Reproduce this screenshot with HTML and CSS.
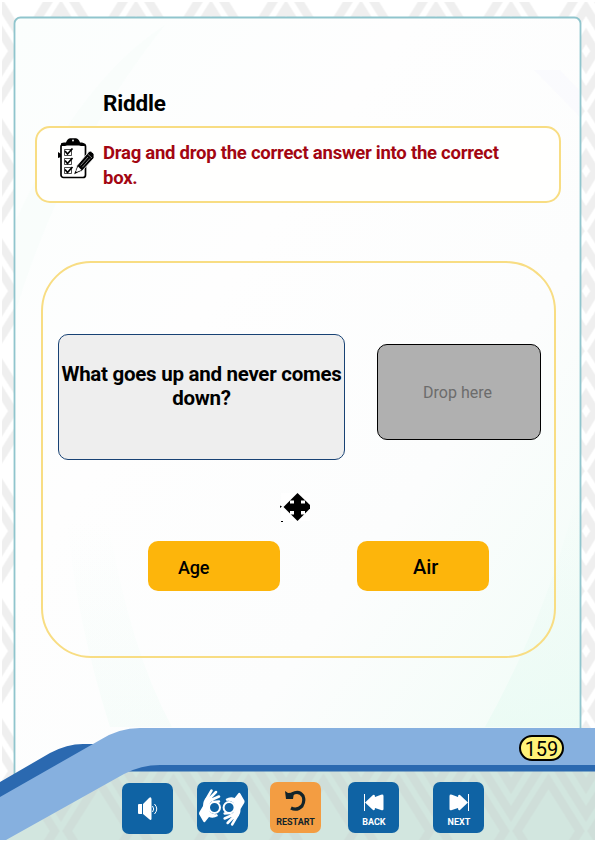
FILE: index.html
```html
<!DOCTYPE html>
<html lang="en">
<head>
<meta charset="utf-8">
<title>Riddle</title>
<link rel="stylesheet" href="styles.css">
</head>
<body>
<svg class="backdrop" viewBox="0 0 596 842" aria-hidden="true">
  <defs>
    <pattern id="weave" width="75" height="120" patternUnits="userSpaceOnUse" x="-51.5" y="-9">
      <g fill="none" stroke-width="8.500">
        <path d="M37.500 -10L81.500 60L37.500 130L-6.500 60ZM37.500 17L64.500 60L37.500 103L10.500 60Z"/>
        <path d="M37.500 45L46.700 60L37.500 75L28.300 60Z"/>
      </g>
    </pattern>
    <linearGradient id="paper" x1="0" y1="0" x2="1" y2="1">
      <stop offset="0" stop-color="#fbfefd"/><stop offset=".35" stop-color="#fefefe"/>
      <stop offset=".65" stop-color="#fcfdfd"/><stop offset="1" stop-color="#effcf6"/>
    </linearGradient>
    <linearGradient id="mint" x1="0" y1="0" x2="0" y2="1">
      <stop offset="0" stop-color="#eafaf4" stop-opacity="0"/><stop offset="1" stop-color="#e8fbf3"/>
    </linearGradient>
  </defs>
  <rect x="2" y="2" width="593" height="838" fill="url(#weave)"/>
  <rect x="14.500" y="17.500" width="566" height="800" rx="6" fill="url(#paper)" stroke="#90c5cd" stroke-width="1.800"/>
  <path d="M67 520Q76 620 110 727H172Q130 650 108 520Z" fill="url(#mint)" opacity=".3"/>
  <path d="M579 485Q550 610 485 727H579Z" fill="url(#mint)" opacity=".7"/>
  <path d="M16 310Q65 150 165 25Q80 80 16 220Z" fill="#f3fbf8" opacity=".3"/>
  <path d="M534 70H560L579 90V116Z" fill="#f8f8fe" opacity=".6"/>
  <path d="M0 840V834L123 771H595V840Z" fill="#d2e6df"/>
  <path d="M6 840L125 771H595V840Z" fill="url(#weave)" class="footer-weave"/>
  <path d="M0 782L50 753Q67 744 83 744H100L150 762H595V771.500H123L0 800Z" fill="#2b69b0"/>
  <path d="M0 797L100 740Q119 728 140 728H595V765H160Q141 765 124 774L6 840H0Z" fill="#86b0df"/>
</svg>

<main class="page">
  <h1 class="title">Riddle</h1>
  <section class="instruction">
    <svg class="checklist" viewBox="0 0 36 42" aria-hidden="true">
      <rect x="3" y="6" width="24.500" height="33.500" rx="2.500" fill="#fff" stroke="#000" stroke-width="1.700"/>
      <path d="M3 8V6Q3 4.500 6 4.500H8Q9 1 12 .3H18Q21 1 22 4.500H24Q27 5 27 8H23L21 7.500H9L7 8Z"/>
      <circle cx="15" cy="2.500" r=".9" fill="#fff"/>
      <path d="M0 14L3 16V19L0 20Z"/>
      <g fill="none" stroke="#000">
        <path d="M6.500 11.500H13.500V17.500H6.500ZM6.500 20.500H13.500V26.500H6.500ZM6.500 29.500H13.500V35.500H6.500Z" stroke-width=".7"/>
        <path d="M7 13L9.500 16L14.500 10.500M7 22.500L9.500 25.500L14.500 20M7 31.500L9.500 34.500L14.500 29" stroke-width="1.800"/>
      </g>
      <path d="M16 36.500L19 27.500L31 13.500Q32 12.500 34 14L36 16V20L24 33Z" stroke="#fff" stroke-width=".8"/>
      <path d="M17.500 34.500L20 28.500L23.500 32Z" fill="#fff"/><path d="M16.200 36L17.500 33L19.500 34.500Z"/>
      <path d="M22.500 27.500L30 19M24.300 29.300L32 20.500M29.500 16L34 20" stroke="#fff" stroke-width=".5"/>
    </svg>
    <p>Drag and drop the correct answer into the correct box.</p>
  </section>

  <section class="game">
    <div class="row">
      <div class="question">What goes up and never comes down?</div>
      <div class="drop">Drop here</div>
    </div>
    <svg class="move" viewBox="0 0 32 30" aria-hidden="true">
      <path d="M1 0H30V28H1Z" fill="#fff"/>
      <path d="M17.500 0L30 12V15.500L17.500 28L3.500 14Z"/>
      <path d="M10 7.500H14V10.500H10ZM21 7.500H25V10.500H21ZM10 18H14V21.500H10ZM21 18H25V21.500H21Z" fill="#fff"/>
      <path d="M0 12.500L2 13.500L0 15ZM1 28H3V29H1Z"/>
    </svg>
    <div class="answers">
      <div class="answer age">Age</div>
      <div class="answer air">Air</div>
    </div>
  </section>

  <div class="page-line"><span class="page-number">159</span></div>

  <nav class="controls">
    <button class="control sound" aria-label="Sound">
      <svg width="20" height="24" viewBox="0 0 20 24"><path d="M0 8Q0 7 1 7H4V17H1Q0 17 0 16Z" fill="#fff"/><path d="M5 7L11 1Q13-1 13.500 2V22Q13 24 11 22L5 17Z" fill="#fff"/><path d="M14.500 9Q17 12 14.500 15M16.500 7Q21 12 16.500 17" fill="none" stroke="#fff" stroke-width="1"/></svg>
    </button>
    <button class="control sign" aria-label="Sign language">
      <svg width="46" height="38" viewBox="0 0 46 38">
        <g id="hand">
          <path d="M1 22L4 17Q4 11 8 8L15 10L11 14Q9 19 11 23Q14 26 18 25L19 27Q14 30 10 28L6 33Q5 34 4 32L0 25Q0 23 1 22Z" fill="#fff"/>
          <path d="M7 11L12.500 1.500M9.500 10.500L17 3M12 11L20 7.500M14 13L20 12.500" fill="none" stroke="#fff" stroke-width="2.500" stroke-linecap="round"/>
          <circle cx="15.500" cy="18.500" r="5.500" fill="#0f63a4" stroke="#fff" stroke-width="2"/>
        </g>
        <use href="#hand" transform="rotate(180 22.800 18.500)"/>
      </svg>
    </button>
    <button class="control restart">
      <svg width="21" height="22" viewBox="0 0 21 22"><path d="M7 4Q14 0 18 6Q20 11 17 16Q12 21 6 18" fill="none" stroke="#12242a" stroke-width="3.200"/><path d="M0 1L3 3L9 2.500L8 9H1Z" fill="#12242a"/></svg>
      <span>RESTART</span>
    </button>
    <button class="control back">
      <svg width="20" height="17" viewBox="0 0 20 17"><path d="M.5 0V17" stroke="#fff"/><path d="M1 8.500L9 1Q11 0 11 3L17 .7Q19.500 0 19.500 2V15Q19.500 17 17 16L11 14Q11 17 9 16Z" fill="#fff"/></svg>
      <span>BACK</span>
    </button>
    <button class="control next">
      <svg width="20" height="17" viewBox="0 0 20 17"><g transform="matrix(-1 0 0 1 20 0)"><path d="M.5 0V17" stroke="#fff"/><path d="M1 8.500L9 1Q11 0 11 3L17 .7Q19.500 0 19.500 2V15Q19.500 17 17 16L11 14Q11 17 9 16Z" fill="#fff"/></g></svg>
      <span>NEXT</span>
    </button>
  </nav>
</main>
</body>
</html>
```
FILE: styles.css
```css
* { box-sizing: border-box; }
body { margin: 0; width: 596px; height: 842px; overflow: hidden; background: #fff; font-family: Roboto, "Liberation Sans", sans-serif; color: #000; }
.backdrop { position: absolute; inset: 0; width: 596px; height: 842px; }
#weave path { stroke: #c4c6c6; stroke-opacity: .27; }
.footer-weave { opacity: .85; }
.page { position: relative; width: 596px; height: 842px; padding-top: 90px; display: flex; flex-direction: column; }
.title { margin: 0 0 10px 103px; font-size: 22.5px; letter-spacing: -.2px; line-height: 26px; font-weight: 700; }
.instruction { margin-left: 35px; width: 526px; height: 77px; border: 2px solid #f8dd83; border-radius: 15px; display: flex; align-items: flex-start; background: #fffffe; padding: 10px 0 0 21px; }
.checklist { width: 36px; height: 42px; flex: none; }
.instruction p { margin: 3px 0 0 9px; width: 410px; color: #a30612; font-size: 18.5px; letter-spacing: -.25px; line-height: 25px; font-weight: 700; }
.game { margin: 58px 0 0 41px; width: 515px; height: 397px; border: 2px solid #f8dd83; border-radius: 50px; padding: 71px 0 0 15px; }
.row { display: flex; align-items: flex-start; gap: 32px; }
.question { width: 287px; height: 126px; padding-top: 27px; border: 1px solid #184274; border-radius: 10px; background: #eee; text-align: center; font-size: 20.5px; letter-spacing: -.27px; line-height: 24px; font-weight: 700; }
.drop { width: 164px; height: 96px; margin-top: 10px; border: 1px solid #000; border-radius: 10px; background: #b0b0b0; color: #6c6c6c; font-size: 16px; line-height: 96px; padding-right: 3px; text-align: center; }
.move { display: block; width: 32px; height: 30px; margin: 33px 0 0 222px; }
.answers { display: flex; gap: 77px; margin: 18px 0 0 90px; }
.answer { width: 132px; height: 50px; border-radius: 10px; background: #fdb50b; line-height: 52px; font-weight: 500; }
.age { padding-left: 30px; font-size: 18px; letter-spacing: -.2px; line-height: 53px; }
.air { padding-left: 56px; font-size: 20px; letter-spacing: -.1px; }
.page-line { height: 26px; margin-top: 77px; display: flex; justify-content: flex-end; padding-right: 32px; }
.page-number { width: 45px; height: 26px; border: 2px solid #000; border-radius: 13px; background: #fff278; font-size: 20px; line-height: 24px; text-align: center; }
.controls { display: grid; grid-template-columns: 51px 51px 51px 51px 51px; column-gap: 23px; margin: 21px 0 0 122px; }
.control { appearance: none; border: 0; margin: 0; padding: 12px 0 0; width: 100%; height: 51px; border-radius: 7px; background: #0f63a4; color: #fff; font: 500 9px/11px Roboto, "Liberation Sans", sans-serif; display: flex; flex-direction: column; align-items: center; }
.sound { margin-top: 1px; padding-top: 14px; }
.sign { padding-top: 7px; margin-left: .5px; }
.restart { background: #f39d42; color: #12242a; padding-top: 8px; font-size: 9px; font-weight: 700; }
.restart span { margin-top: 5px; }
.back span, .next span { margin-top: 6px; font-weight: 700; }
.back { margin-left: 4.4px; }
.next { margin-left: 15.4px; }
```
